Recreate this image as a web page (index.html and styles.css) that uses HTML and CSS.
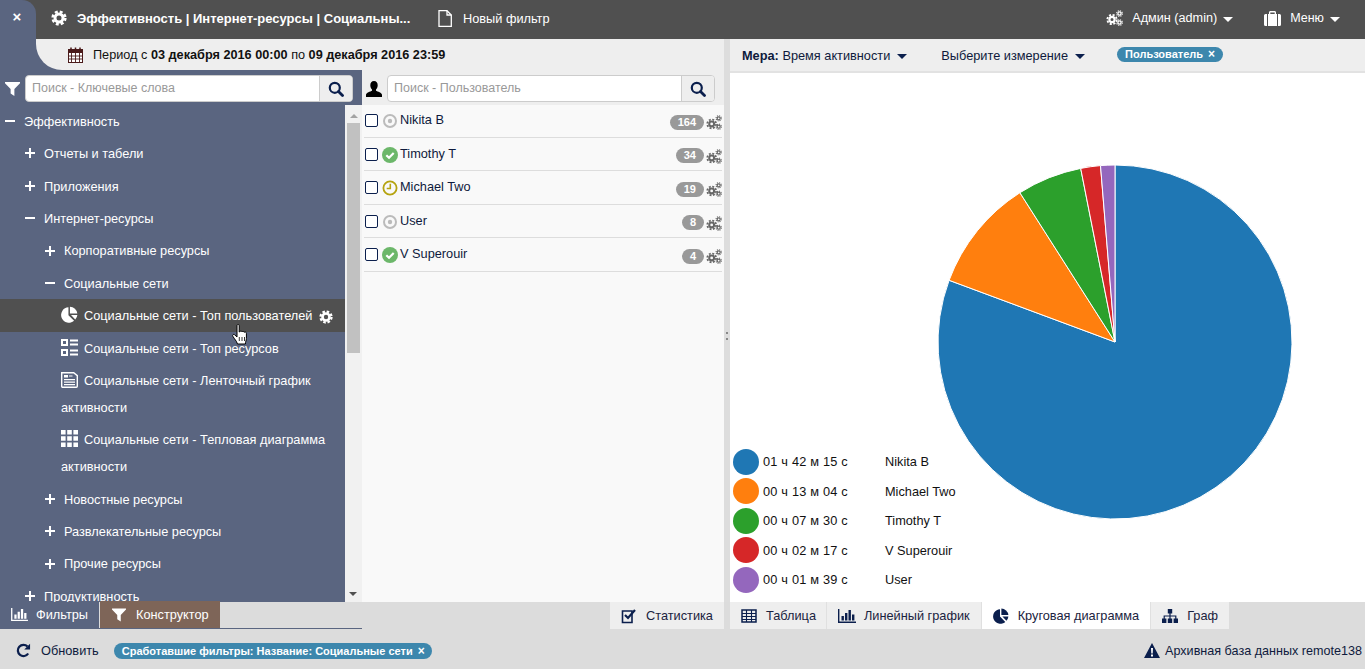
FILE: index.html
```html
<!DOCTYPE html>
<html lang="ru">
<head>
<meta charset="utf-8">
<title>Эффективность</title>
<link rel="stylesheet" href="styles.css">
</head>
<body>
<svg class="defs" width="0" height="0">
  <symbol id="cog" viewBox="0 0 16 16"><circle cx="8" cy="8" r="4" fill="none" stroke="currentColor" stroke-width="3"/><circle cx="8" cy="8" r="6.3" fill="none" stroke="currentColor" stroke-width="2.6" stroke-dasharray="2.9 2.05"/></symbol>
  <symbol id="cogs" viewBox="0 0 17 16"><g fill="none" stroke="currentColor"><circle cx="6" cy="9.5" r="2.6" stroke-width="2.2"/><circle cx="6" cy="9.5" r="4.7" stroke-width="1.8" stroke-dasharray="2.1 1.6"/><circle cx="13.5" cy="3.5" r="1.6" stroke-width="1.3"/><circle cx="13.5" cy="3.5" r="2.8" stroke-width="1.1" stroke-dasharray="1.2 1"/><circle cx="13.5" cy="12.5" r="1.6" stroke-width="1.3"/><circle cx="13.5" cy="12.5" r="2.8" stroke-width="1.1" stroke-dasharray="1.2 1"/></g></symbol>
  <symbol id="search" viewBox="0 0 16 16"><circle cx="6.8" cy="6.8" r="5" fill="none" stroke="currentColor" stroke-width="2.2"/><path d="M10.5 10.5l4 4" stroke="currentColor" stroke-width="2.8" stroke-linecap="round"/></symbol>
  <symbol id="funnel" viewBox="0 0 16 16"><path d="M0 1h16v1.4L10 8.6V16L6 13.4V8.6L0 2.4z" fill="currentColor"/></symbol>
  <symbol id="pie" viewBox="0 0 16 16"><path d="M7 1.2V8.600l5.300 5.300A7.300 7.300 0 1 1 7 1.200z" fill="currentColor"/><path d="M8.400 .6A7.400 7.400 0 0 1 15.400 7H8.400z" fill="currentColor"/><path d="M9.400 8.400h6a7.400 7.400 0 0 1-2 4.300z" fill="currentColor"/></symbol>
  <symbol id="bars" viewBox="0 0 18 16"><path d="M0 1h1.400v12.600H18V15H0z" fill="currentColor"/><path d="M3.500 8h2.400v4.500H3.500zM7 5h2.400v7.500H7zM10.500 2h2.400v10.500h-2.400zM14 6.500h2.400v6H14z" fill="currentColor"/></symbol>
</svg>

<div class="app">
  <header class="topbar">
    <div class="closetab">×</div>
    <svg class="ic ic-gear"><use href="#cog"/></svg>
    <span class="title">Эффективность | Интернет-ресурсы | Социальны...</span>
    <svg class="ic-doc" viewBox="0 0 14 17"><path d="M1 .7h8l4.300 4.300v11.300H1z" fill="none" stroke="#fff" stroke-width="1.300"/><path d="M9 .7V5h4.300" fill="none" stroke="#fff" stroke-width="1.300"/></svg>
    <span class="newfilter">Новый фильтр</span>
    <div class="topright">
      <svg class="ic-cogs"><use href="#cogs"/></svg>
      <span class="adminname">Админ (admin)</span>
      <i class="caret caret-white caret-admin"></i>
      <svg class="ic-case" viewBox="0 0 17 16"><path d="M0 5.500A1.500 1.500 0 0 1 1.500 4H3v12H1.500A1.500 1.500 0 0 1 0 14.500zM4 4h1V2.500C5 1.500 5.700 1 6.500 1h4c.8 0 1.500.5 1.500 1.500V4h1v12H4zM6.300 4h4.400V2.400H6.300zM14 4h1.500A1.500 1.500 0 0 1 17 5.500v9a1.500 1.500 0 0 1-1.500 1.500H14z" fill="#fff" fill-rule="evenodd"/></svg>
      <span class="menuname">Меню</span>
      <i class="caret caret-white caret-menu"></i>
    </div>
  </header>

  <main class="workspace">
    <section class="leftpane">
      <div class="periodwrap">
        <div class="period">
          <svg class="ic-cal" viewBox="0 0 15 16"><rect x=".5" y="2.500" width="14" height="13" fill="#fff" stroke="#4a1a1a"/><path d="M0 2h15v4H0z" fill="#4a1a1a"/><path d="M3 .5v3M7.500 .5v3M12 .5v3" stroke="#4a1a1a" stroke-width="1.500"/><path d="M3.500 6v9M7.500 6v9M11.500 6v9M1 9h13M1 12h13" stroke="#4a1a1a" stroke-width=".9"/></svg>
          <span>Период с <b>03 декабря 2016 00:00</b> по <b>09 декабря 2016 23:59</b></span>
        </div>
      </div>
      <div class="columns">
        <nav class="treecol">
          <div class="searchrow searchrow-tree">
            <svg class="ic-funnel"><use href="#funnel"/></svg>
            <div class="searchbox"><span class="ph">Поиск - Ключевые слова</span><span class="sbtn"><svg class="ic-search"><use href="#search"/></svg></span></div>
          </div>
          <div class="treescroll">
            <ul class="tree">
              <li class="row l0"><i class="minus"></i>Эффективность</li>
              <li class="row l1"><i class="plus"></i>Отчеты и табели</li>
              <li class="row l1"><i class="plus"></i>Приложения</li>
              <li class="row l1"><i class="minus"></i>Интернет-ресурсы</li>
              <li class="row l2"><i class="plus"></i>Корпоративные ресурсы</li>
              <li class="row l2"><i class="minus"></i>Социальные сети</li>
              <li class="row l3 active">
                <svg class="ic-leaf"><use href="#pie"/></svg>Социальные сети - Топ пользователей
                <svg class="ic-rowgear"><use href="#cog"/></svg>
                <svg class="hand" viewBox="0 0 16 22"><path d="M5 1.500c0-1.300 2.200-1.300 2.200 0V8l.6-.2c.3-1 2-1 2.200.1.500-.8 2-.6 2.200.4.600-.6 2.200-.3 2.200 1v5.200c0 2.200-1 3-1 5.500H5.500C5 18 3.800 16.500 2.500 14.800L.8 12.200c-.8-1.300.8-2.500 1.900-1.400L5 13z" fill="#fff" stroke="#000" stroke-width="1"/><path d="M7.300 13v4M10 13v4M12.500 13v4" stroke="#000" stroke-width=".8"/></svg>
              </li>
              <li class="row l3"><svg class="ic-leaf" viewBox="0 0 17 17"><path d="M0 0h7v7H0zM2 2v3h3V2zM0 10h7v7H0zM2 12v3h3v-3zM9 .5h8v2H9zM9 4.500h8v2H9zM9 10.500h8v2H9zM9 14.500h8v2H9z" fill="#fff" fill-rule="evenodd"/></svg>Социальные сети - Топ ресурсов</li>
              <li class="row l3 wrap"><svg class="ic-leaf" viewBox="0 0 17 17"><path d="M.7 1.700h12l3.600 3v10.600a1 1 0 0 1-1 1H1.700a1 1 0 0 1-1-1z" fill="#5a6580" stroke="#fff" stroke-width="1.400"/><path d="M3 4h4v2.500H3zM8 4.500h3.500v1H8zM3 8h11v1.200H3zM3 10.500h11v1.200H3zM3 13h11v1.200H3z" fill="#fff"/></svg>Социальные сети - Ленточный график активности</li>
              <li class="row l3 wrap"><svg class="ic-leaf" viewBox="0 0 17 17"><path d="M0 0h4.600v4.600H0zM6.200 0h4.600v4.600H6.200zM12.400 0H17v4.600h-4.600zM0 6.200h4.600v4.600H0zM6.200 6.200h4.600v4.600H6.200zM12.400 6.200H17v4.600h-4.600zM0 12.400h4.600V17H0zM6.200 12.400h4.600V17H6.200zM12.400 12.400H17V17h-4.600z" fill="#fff"/></svg>Социальные сети - Тепловая диаграмма активности</li>
              <li class="row l2"><i class="plus"></i>Новостные ресурсы</li>
              <li class="row l2"><i class="plus"></i>Развлекательные ресурсы</li>
              <li class="row l2"><i class="plus"></i>Прочие ресурсы</li>
              <li class="row l1"><i class="plus"></i>Продуктивность</li>
            </ul>
            <div class="scrollbar"><i class="arrow-up"></i><i class="thumb"></i><i class="arrow-down"></i></div>
          </div>
        </nav>
        <div class="usercol">
          <div class="searchrow searchrow-user">
            <svg class="ic-user" viewBox="0 0 16 16"><path d="M8 0c2.400 0 3.700 1.800 3.700 4.300 0 1.800-.8 3.400-1.700 4.300v1.200c1.500.8 6 1.800 6 4.200v2H0v-2c0-2.400 4.500-3.400 6-4.200V8.600C5.100 7.700 4.300 6.100 4.300 4.300 4.300 1.800 5.600 0 8 0z" fill="#000"/></svg>
            <div class="searchbox searchbox-user"><span class="ph">Поиск - Пользователь</span><span class="sbtn"><svg class="ic-search"><use href="#search"/></svg></span></div>
          </div>
          <ul class="users">
            <li class="user"><span class="check"></span><svg class="st" viewBox="0 0 16 16"><circle cx="8" cy="8" r="6" fill="none" stroke="#bbb" stroke-width="2"/><circle cx="8" cy="8" r="2.200" fill="#bbb"/></svg><span class="uname">Nikita B</span><span class="badge">164</span><svg class="ic-ucogs"><use href="#cogs"/></svg></li>
            <li class="user"><span class="check"></span><svg class="st" viewBox="0 0 16 16"><circle cx="8" cy="8" r="8" fill="#6cb76a"/><path d="M4.300 8.200l2.700 2.600 4.700-4.800" fill="none" stroke="#fff" stroke-width="2.200"/></svg><span class="uname">Timothy T</span><span class="badge">34</span><svg class="ic-ucogs"><use href="#cogs"/></svg></li>
            <li class="user"><span class="check"></span><svg class="st" viewBox="0 0 16 16"><circle cx="8" cy="8" r="6.600" fill="none" stroke="#b5a30f" stroke-width="1.800"/><path d="M8.300 3.800v4.700H4.700" fill="none" stroke="#b5a30f" stroke-width="1.600"/></svg><span class="uname">Michael Two</span><span class="badge">19</span><svg class="ic-ucogs"><use href="#cogs"/></svg></li>
            <li class="user"><span class="check"></span><svg class="st" viewBox="0 0 16 16"><circle cx="8" cy="8" r="6" fill="none" stroke="#bbb" stroke-width="2"/><circle cx="8" cy="8" r="2.200" fill="#bbb"/></svg><span class="uname">User</span><span class="badge">8</span><svg class="ic-ucogs"><use href="#cogs"/></svg></li>
            <li class="user"><span class="check"></span><svg class="st" viewBox="0 0 16 16"><circle cx="8" cy="8" r="8" fill="#6cb76a"/><path d="M4.300 8.200l2.700 2.600 4.700-4.800" fill="none" stroke="#fff" stroke-width="2.200"/></svg><span class="uname">V Superouir</span><span class="badge">4</span><svg class="ic-ucogs"><use href="#cogs"/></svg></li>
          </ul>
        </div>
      </div>
    </section>
    <div class="splitter"><i></i></div>
    <section class="rightpane">
      <div class="measures">
        <span class="m1"><b>Мера:</b> Время активности</span><i class="caret caret-dark"></i>
        <span class="m2">Выберите измерение</span><i class="caret caret-dark"></i>
        <span class="pill pill-user">Пользователь <em>×</em></span>
      </div>
      <div class="chart">
        <svg class="piechart" viewBox="-178 -178 356 356" width="356" height="356">
          <g stroke="#fff" stroke-width="1" stroke-linejoin="round">
            <path d="M0 0V-177A177 177 0 1 1 -165.900 -61.700Z" fill="#1f77b4"/>
            <path d="M0 0L-165.900 -61.700A177 177 0 0 1 -95.100 -149.300Z" fill="#ff7f0e"/>
            <path d="M0 0L-95.100 -149.300A177 177 0 0 1 -34.300 -173.600Z" fill="#2ca02c"/>
            <path d="M0 0L-34.300 -173.600A177 177 0 0 1 -14.500 -176.400Z" fill="#d62728"/>
            <path d="M0 0L-14.500 -176.400A177 177 0 0 1 0 -177Z" fill="#9467bd"/>
          </g>
        </svg>
        <ul class="legend">
          <li><i class="dot d1"></i><span class="ltime">01 ч 42 м 15 с</span><span>Nikita B</span></li>
          <li><i class="dot d2"></i><span class="ltime">00 ч 13 м 04 с</span><span>Michael Two</span></li>
          <li><i class="dot d3"></i><span class="ltime">00 ч 07 м 30 с</span><span>Timothy T</span></li>
          <li><i class="dot d4"></i><span class="ltime">00 ч 02 м 17 с</span><span>V Superouir</span></li>
          <li><i class="dot d5"></i><span class="ltime">00 ч 01 м 39 с</span><span>User</span></li>
        </ul>
      </div>
    </section>
  </main>

  <div class="tabsrow">
    <div class="lefttabs">
      <div class="ltab ltab-f"><svg class="ic-bars"><use href="#bars"/></svg>Фильтры</div>
      <div class="ltab ltab-k"><svg class="ic-kfunnel"><use href="#funnel"/></svg>Конструктор</div>
    </div>
    <div class="tab tab-stat"><svg class="ic-tab" viewBox="0 0 16 16"><path d="M1.500 3h9.500v11.500H1.500z" fill="none" stroke="currentColor" stroke-width="1.600"/><path d="M4 7l3 3 7-8" fill="none" stroke="currentColor" stroke-width="2.200"/></svg>Статистика</div>
    <div class="righttabs">
      <div class="tab tab-table"><svg class="ic-tab" viewBox="0 0 16 16"><path d="M1 2h14v12H1z" fill="none" stroke="currentColor" stroke-width="1.500"/><path d="M1 5.500h14M1 8.500h14M1 11.500h14M5.500 2v12M10.500 2v12" stroke="currentColor" stroke-width="1.100"/></svg>Таблица</div>
      <div class="tab"><svg class="ic-tab ic-tab-b"><use href="#bars"/></svg>Линейный график</div>
      <div class="tab tab-on"><svg class="ic-tab"><use href="#pie"/></svg>Круговая диаграмма</div>
      <div class="tab"><svg class="ic-tab" viewBox="0 0 16 16"><path d="M5.800 1h4.400v4.400H5.800zM0 10.600h4.400V15H0zM5.800 10.600h4.400V15H5.800zM11.600 10.600H16V15h-4.400z" fill="currentColor"/><path d="M8 5v6M2.200 11V8h11.600v3" fill="none" stroke="currentColor" stroke-width="1.200"/></svg>Граф</div>
    </div>
  </div>

  <footer class="status">
    <svg class="ic-refresh" viewBox="0 0 16 16"><path d="M13 11.200A6 6 0 1 1 12.300 3.800" fill="none" stroke="currentColor" stroke-width="2.400"/><path d="M15 .8v6.200H8.800z" fill="currentColor"/></svg>
    <span class="refresh">Обновить</span>
    <span class="pill pill-status">Сработавшие фильтры: Название: Социальные сети <em>×</em></span>
    <div class="archive">
      <svg class="ic-warn" viewBox="0 0 16 15"><path d="M8 0L16 15H0z" fill="#0b1f4d"/><path d="M7 5h2l-.3 5.500H7.300zM7 11.500h2v2H7z" fill="#fff"/></svg>
      <span>Архивная база данных remote138</span>
    </div>
  </footer>
</div>
</body>
</html>
```
FILE: styles.css
```css
* { box-sizing: border-box; }
html, body { margin: 0; padding: 0; height: 100%; overflow: hidden; }
body { font-family: "Liberation Sans", Arial, sans-serif; font-size: 12.75px; color: #0e1a3c; background: #dcdcdc; }
ul { list-style: none; margin: 0; padding: 0; }
i, em { font-style: normal; }
.defs { position: absolute; }
.app { width: 1365px; height: 669px; display: flex; flex-direction: column; }

/* top bar */
.topbar { height: 39px; flex: none; background: #505050; color: #fff; display: flex; align-items: center; padding-bottom: 3px; }
.closetab { width: 36px; height: 39px; align-self: flex-start; background: #5a6580; border-top-right-radius: 14px; font-weight: bold; font-size: 15px; line-height: 33px; text-align: center; padding-right: 2px; flex: none; }
.ic-gear { width: 16px; height: 16px; margin-left: 15px; color: #fff; }
.title { font-weight: bold; font-size: 13px; margin-left: 10px; width: 360px; white-space: nowrap; }
.ic-doc { width: 14px; height: 17px; margin-left: 1px; }
.newfilter { margin-left: 11px; }
.topright { margin-left: auto; display: flex; align-items: center; padding-right: 25px; }
.ic-cogs { width: 17px; height: 16px; margin-right: 9px; color: #fff; }
.adminname { font-size: 12.65px; }
.caret { display: block; width: 0; height: 0; border-left: 5px solid transparent; border-right: 5px solid transparent; }
.caret-white { border-top: 5px solid #fff; margin-top: 2px; }
.caret-dark { border-top: 5px solid #0b1f4d; margin-top: 2px; }
.caret-admin { margin-left: 6px; }
.ic-case { width: 17px; height: 16px; margin: 0 9px 0 31px; }
.menuname { font-size: 12.5px; }
.caret-menu { margin-left: 6px; }

/* workspace */
.workspace { flex: none; height: 563px; display: flex; }
.leftpane { width: 724px; flex: none; display: flex; flex-direction: column; }
.periodwrap { height: 31px; padding-left: 36px; background: #5a6580; flex: none; }
.period { height: 31px; background: #eee; border-bottom-left-radius: 26px; display: flex; align-items: center; padding-left: 32px; color: #111; font-size: 12.7px; }
.ic-cal { width: 15px; height: 16px; margin-right: 10px; }
.period b { font-weight: bold; }
.columns { flex: 1; display: flex; min-height: 0; }
.treecol { width: 362px; flex: none; background: #5a6580; display: flex; flex-direction: column; color: #fff; }
.searchrow { height: 35px; flex: none; display: flex; align-items: flex-start; padding-top: 5px; }
.ic-funnel { width: 15px; height: 15px; margin: 6px 5px 0 5px; color: #fff; flex: none; }
.searchbox { width: 328px; height: 27px; background: #fff; border: 1px solid #ccc; border-radius: 4px; display: flex; align-items: center; justify-content: space-between; overflow: hidden; flex: none; }
.ph { color: #999; padding: 0 0 2px 6px; font-size: 12.5px; }
.sbtn { width: 33px; height: 25px; background: #eee; border-left: 1px solid #ccc; display: flex; align-items: center; justify-content: center; }
.ic-search { width: 16px; height: 16px; color: #0b1f4d; }
.treescroll { flex: 1; min-height: 0; display: flex; overflow: hidden; }
.tree { width: 345px; flex: none; }
.row { position: relative; line-height: 27px; padding: 2.8px 0 2.6px; }
.l0 { padding-left: 24px; }
.l1 { padding-left: 44px; }
.l2 { padding-left: 64px; }
.l3 { padding-left: 61px; }
.active { background: #505050; }
.plus, .minus { position: absolute; top: 15px; width: 10px; height: 2px; background: #fff; margin-left: -19px; }
.plus::after { content: ""; position: absolute; left: 4px; top: -4px; width: 2px; height: 10px; background: #fff; }
.ic-leaf { width: 17px; height: 17px; margin-right: 6px; vertical-align: -3px; color: #fff; }
.ic-rowgear { position: absolute; left: 319px; top: 11px; width: 14px; height: 14px; color: #fff; }
.hand { position: absolute; left: 232px; top: 25px; width: 16px; height: 22px; }
.scrollbar { width: 17px; flex: none; background: #f1f1f1; position: relative; display: flex; flex-direction: column; align-items: center; }
.thumb { position: absolute; top: 18px; left: 2px; width: 13px; height: 230px; background: #c1c1c1; }
.arrow-up { position: absolute; top: 9px; left: 5px; border-left: 4px solid transparent; border-right: 4px solid transparent; border-bottom: 4px solid #a3a3a3; }
.arrow-down { position: absolute; bottom: 6px; left: 4px; border-left: 4px solid transparent; border-right: 4px solid transparent; border-top: 4px solid #505050; }
.usercol { flex: 1; background: #f9f9f9; display: flex; flex-direction: column; }
.searchrow-user { background: #eee; }
.ic-user { width: 16px; height: 16px; margin: 6px 5px 0 4px; flex: none; }
.users { padding: 0 2px; margin-top: -1px; }
.user { height: 33.500px; border-bottom: 1px solid #ddd; display: flex; align-items: center; padding-left: 1px; }
.check { width: 13px; height: 13px; border: 1px solid #0b1f4d; border-radius: 2px; background: #fff; flex: none; margin-top: 1px; }
.st { width: 16px; height: 16px; margin-left: 4px; flex: none; margin-top: 2px; }
.uname { margin-left: 2px; margin-top: -1px; }
.badge { margin-left: auto; background: #999; color: #fff; font-weight: bold; font-size: 11px; line-height: 15px; border-radius: 8px; padding: 0 8px; margin-top: 4px; }
.ic-ucogs { width: 16px; height: 15px; color: #666; margin: 5px 0 0 2px; flex: none; }

.splitter { width: 6px; flex: none; background: #ddd; display: flex; align-items: center; justify-content: center; }
.splitter i { width: 2px; height: 8px; border-top: 2px dotted #888; border-bottom: 2px dotted #888; margin-top: 30px; }

/* right */
.rightpane { flex: 1; display: flex; flex-direction: column; background: #fff; min-width: 0; }
.measures { height: 34px; flex: none; background: #eee; border-bottom: 2px solid #e2e2e2; display: flex; align-items: center; padding: 1px 0 0 12px; color: #0e1a3c; }
.m1 { margin-right: 7px; }
.m2 { margin: 0 7px 0 34px; }
.pill { display: inline-block; background: #3d87ad; color: #fff; font-weight: bold; font-size: 11px; border-radius: 9px; white-space: nowrap; }
.pill em { margin-left: 2px; font-size: 12px; }
.pill-user { margin: -3px 0 0 32px; line-height: 15px; padding: 0 8px 0 8px; }
.chart { flex: 1; position: relative; padding: 91px 0 0 207px; }
.piechart { display: block; }
.legend { position: absolute; left: 3px; top: 374px; }
.legend li { display: flex; align-items: center; height: 29.500px; color: #111; }
.dot { width: 26px; height: 26px; border-radius: 50%; margin-right: 4px; }
.d1 { background: #1f77b4; }
.d2 { background: #ff7f0e; }
.d3 { background: #2ca02c; }
.d4 { background: #d62728; }
.d5 { background: #9467bd; }
.ltime { width: 122px; letter-spacing: .2px; }

/* tabs */
.tabsrow { height: 28px; flex: none; display: flex; }
.lefttabs { width: 362px; flex: none; height: 28px; margin-top: -1px; display: flex; border-bottom: 1px solid #5a6580; color: #fff; }
.ltab { height: 27px; display: flex; align-items: center; }
.ltab-f { width: 99px; background: #5a6580; padding-left: 10px; }
.ltab-k { width: 120px; background: #7e6558; margin-left: 1px; padding-left: 12px; }
.ic-bars { width: 19px; height: 15px; margin-right: 7px; color: #fff; }
.ic-kfunnel { width: 14px; height: 15px; margin-right: 10px; color: #fff; }
.tab { height: 27px; display: flex; align-items: center; background: #eee; padding: 0 11px; color: #1a2340; border-left: 1px solid #e0e0e0; white-space: nowrap; }
.tab-stat { margin-left: 248px; width: 114px; border-left: 0; }
.righttabs { margin-left: 6px; display: flex; }
.righttabs .tab:first-child { border-left: 0; }
.tab-table { padding-right: 10px; }
.tab-on { background: #fff; }
.ic-tab { width: 16px; height: 16px; margin-right: 9px; color: #0b1f4d; }
.ic-tab-b { width: 18px; margin-right: 8px; }

/* status */
.status { flex: 1; display: flex; align-items: center; padding: 2px 3px 0 16px; }
.ic-refresh { width: 15px; height: 15px; color: #0b1f4d; }
.refresh { margin-left: 10px; }
.pill-status { margin-left: 15px; line-height: 16px; padding: 0 7px 0 8px; }
.archive { margin-left: auto; display: flex; align-items: center; font-size: 12.6px; }
.ic-warn { width: 16px; height: 15px; margin-right: 5px; }
```
